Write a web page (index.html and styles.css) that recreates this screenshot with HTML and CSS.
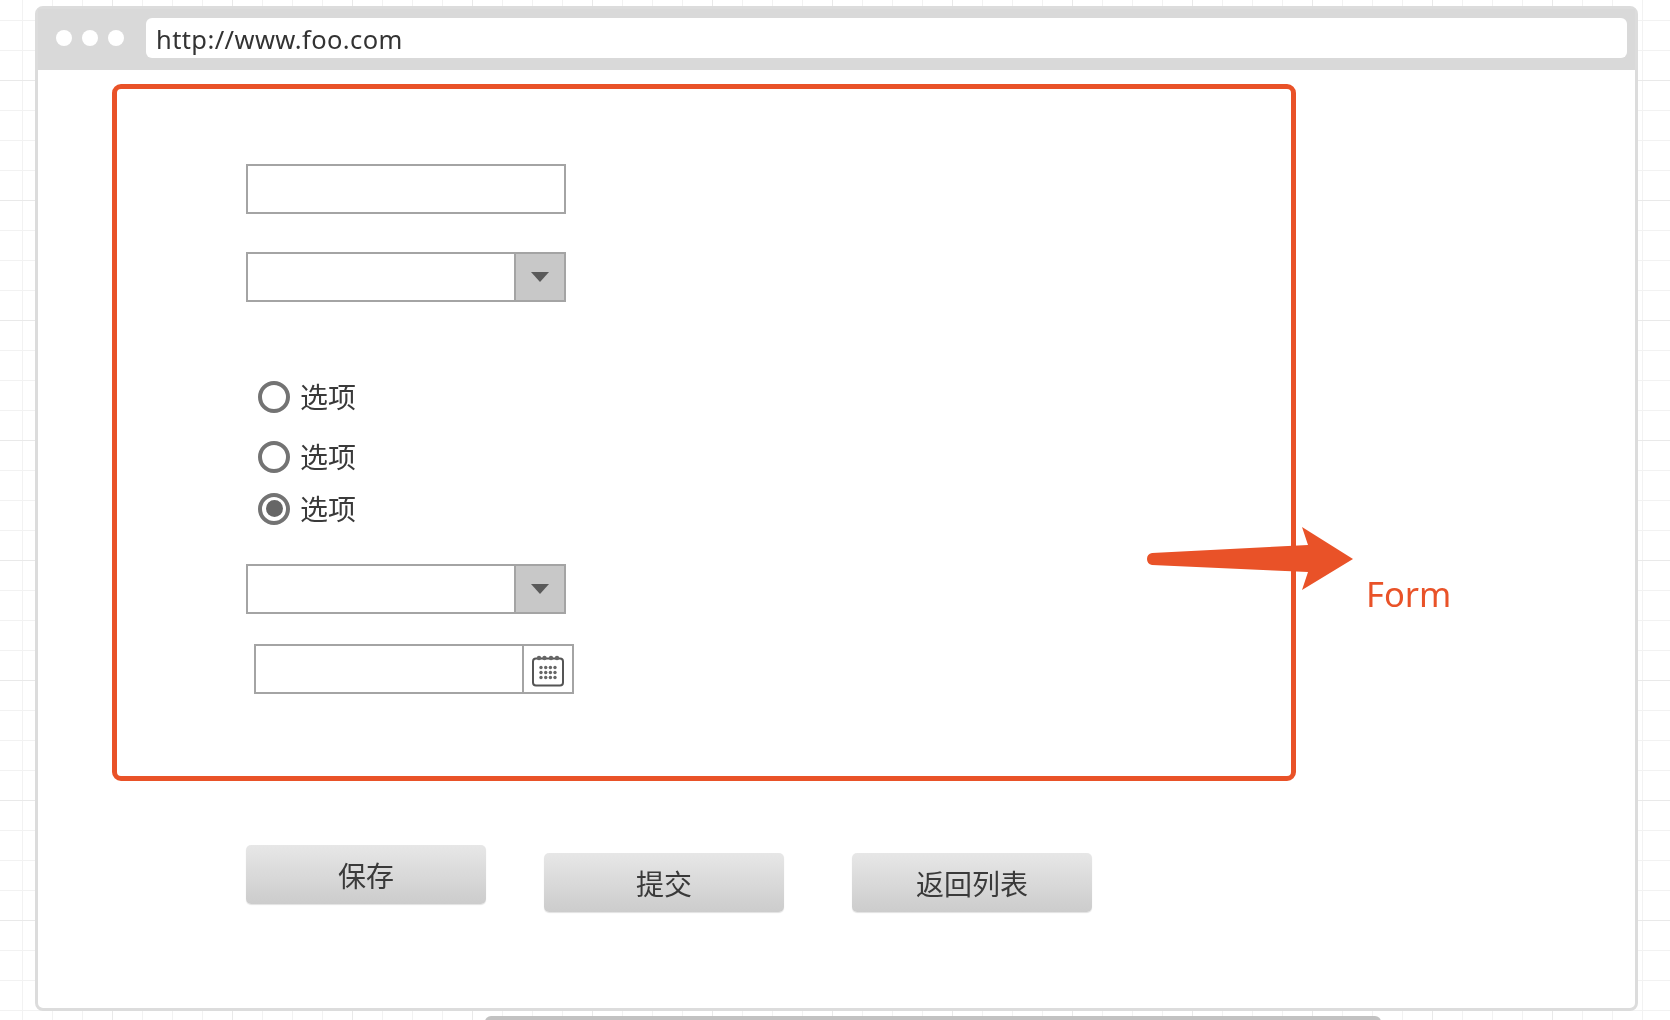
FILE: index.html
```html
<!DOCTYPE html>
<html lang="zh-CN">
<head>
<meta charset="utf-8">
<title>Form wireframe</title>
<link rel="stylesheet" href="styles.css">
</head>
<body>
<div class="canvas">
  <div class="window">
    <div class="titlebar">
      <div class="dots"><span class="dot"></span><span class="dot"></span><span class="dot"></span></div>
      <div class="url">http://www.foo.com</div>
    </div>
    <form class="form-box">
      <div class="field"></div>
      <div class="field select gap-38"><span class="grow"></span><span class="drop"><i class="caret"></i></span></div>
      <div class="radio-row gap-78"><span class="radio"></span><span class="label">选项</span></div>
      <div class="radio-row gap-27"><span class="radio"></span><span class="label">选项</span></div>
      <div class="radio-row gap-19"><span class="radio on"></span><span class="label">选项</span></div>
      <div class="field select gap-39"><span class="grow"></span><span class="drop"><i class="caret"></i></span></div>
      <div class="field date gap-30">
        <span class="grow"></span>
        <span class="cal">
          <svg class="cal-icon" width="34" height="34" viewBox="0 0 34 34" fill="none">
            <rect x="2" y="4.5" width="30" height="27" rx="3" stroke="#555" stroke-width="2"/>
            <g fill="#666">
              <circle cx="8" cy="4" r="2.2"/><circle cx="13.5" cy="4" r="2.2"/><circle cx="20" cy="4" r="2.2"/><circle cx="26" cy="4" r="2.2"/>
              <circle cx="10" cy="13.5" r="1.7"/><circle cx="14.7" cy="13.5" r="1.7"/><circle cx="19.4" cy="13.5" r="1.7"/><circle cx="24" cy="13.5" r="1.7"/>
              <circle cx="10" cy="18.5" r="1.7"/><circle cx="14.7" cy="18.5" r="1.7"/><circle cx="19.4" cy="18.5" r="1.7"/><circle cx="24" cy="18.5" r="1.7"/>
              <circle cx="10" cy="23.5" r="1.7"/><circle cx="14.7" cy="23.5" r="1.7"/><circle cx="19.4" cy="23.5" r="1.7"/><circle cx="24" cy="23.5" r="1.7"/>
            </g>
          </svg>
        </span>
      </div>
    </form>
    <div class="actions">
      <button type="button" class="btn">保存</button>
      <button type="button" class="btn btn-low btn-second">提交</button>
      <button type="button" class="btn btn-low btn-third">返回列表</button>
    </div>
  </div>
  <div class="scrollbar"></div>

  <svg class="arrow" width="220" height="80" viewBox="1145 520 220 80">
    <path d="M1152 553 L1308 545 L1302 527 L1353 559 L1302 590 L1308 572 L1152 565 Q1147 564 1147 559 Q1147 554 1152 553 Z" fill="#e95228"/>
  </svg>
  <div class="annotation">Form</div>
</div>
</body>
</html>
```

FILE: styles.css
```css
* { box-sizing: border-box; }
html, body { margin: 0; padding: 0; background: #fff; }
body { width: 1670px; height: 1020px; overflow: hidden; }

.canvas {
  position: relative;
  width: 1670px;
  height: 1020px;
  padding: 6px 0 0 35px;
  overflow: hidden;
  font-family: "Noto Sans", "Noto Sans CJK SC", sans-serif;
  color: #3a3a3a;
  filter: blur(0.6px);
  background-color: #fff;
  background-image:
    linear-gradient(#e9e9e9 1px, transparent 1px),
    linear-gradient(90deg, #e9e9e9 1px, transparent 1px),
    linear-gradient(#f2f2f2 1px, transparent 1px),
    linear-gradient(90deg, #f2f2f2 1px, transparent 1px);
  background-size: 120px 120px, 120px 120px, 30px 30px, 30px 30px;
  background-position: 0 80px, 112px 0, 0 20px, 22px 0;
}

.window {
  width: 1603px;
  height: 1005px;
  background: #fff;
  border: 3px solid #dcdcdc;
  border-radius: 8px;
}

.titlebar {
  display: flex;
  align-items: flex-start;
  height: 61px;
  padding: 9px 8px 0 18px;
  background: #d9d9d9;
}
.dots { display: flex; gap: 10px; margin-top: 12px; }
.dot { width: 16px; height: 16px; border-radius: 50%; background: #fff; }
.url {
  flex: 1;
  height: 40px;
  margin-left: 22px;
  padding-left: 10px;
  background: #fff;
  border-radius: 6px;
  font-size: 25.5px;
  line-height: 43px;
  letter-spacing: 0.4px;
  color: #333;
}

.form-box {
  display: flex;
  flex-direction: column;
  align-items: flex-start;
  width: 1184px;
  height: 697px;
  margin: 14px 0 0 74px;
  padding: 75px 0 0 129px;
  border: 5px solid #e95228;
  border-radius: 9px;
}

.field {
  display: flex;
  width: 320px;
  height: 50px;
  border: 2px solid #a4a4a4;
  background: #fff;
}
.grow { flex: 1; }
.select .drop {
  display: flex;
  align-items: center;
  justify-content: center;
  width: 50px;
  background: #c8c8c8;
  border-left: 2px solid #a4a4a4;
}
.caret {
  width: 0;
  height: 0;
  border-left: 9px solid transparent;
  border-right: 9px solid transparent;
  border-top: 10px solid #5a5a5a;
}
.date { margin-left: 8px; }
.cal {
  display: flex;
  align-items: center;
  justify-content: center;
  width: 50px;
  padding-top: 4px;
  border-left: 2px solid #a4a4a4;
}

.gap-38 { margin-top: 38px; }
.gap-78 { margin-top: 78px; }
.gap-27 { margin-top: 27px; }
.gap-19 { margin-top: 19px; }
.gap-39 { margin-top: 39px; }
.gap-30 { margin-top: 30px; }

.radio-row {
  display: flex;
  align-items: center;
  gap: 10px;
  height: 33px;
  margin-left: 12px;
}
.radio {
  display: flex;
  align-items: center;
  justify-content: center;
  width: 32px;
  height: 32px;
  border: 4px solid #737373;
  border-radius: 50%;
}
.radio.on::before {
  content: "";
  width: 17px;
  height: 17px;
  border-radius: 50%;
  background: #666;
}
.label {
  font-family: "Noto Sans CJK SC", sans-serif;
  font-size: 28px;
  line-height: 33px;
  color: #3a3a3a;
}

.actions {
  display: flex;
  align-items: flex-start;
  margin: 64px 0 0 208px;
}
.btn {
  width: 240px;
  height: 59px;
  padding: 0;
  border: 0;
  border-radius: 5px;
  background: linear-gradient(#e7e7e7, #cccccc);
  box-shadow: 0 1px 1px #e2e2e2;
  font-family: "Noto Sans CJK SC", sans-serif;
  font-size: 28px;
  color: #3a3a3a;
}
.btn-low { margin-top: 8px; }
.btn-second { margin-left: 58px; }
.btn-third { margin-left: 68px; }

.scrollbar {
  width: 896px;
  height: 6px;
  margin: 5px 0 0 450px;
  border-radius: 6px 6px 0 0;
  background: #c2c2c2;
}

.arrow { position: absolute; left: 1145px; top: 520px; }
.annotation {
  position: absolute;
  left: 1366px;
  top: 570px;
  font-size: 34.5px;
  line-height: 48px;
  color: #e95228;
}
```
